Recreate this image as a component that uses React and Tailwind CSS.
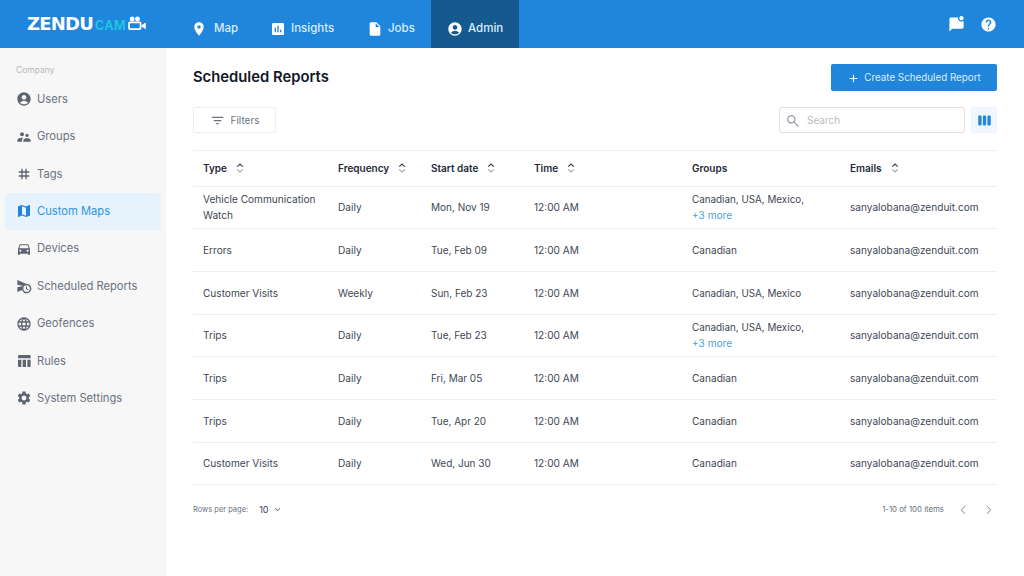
import {
  MdPlace, MdAssessment, MdInsertDriveFile, MdAccountCircle, MdMarkChatUnread, MdHelp,
  MdSupervisorAccount, MdTag, MdMap, MdDirectionsCar, MdScheduleSend, MdLanguage, MdTableChart,
  MdSettings, MdFilterList, MdSearch, MdViewWeek, MdAdd, MdKeyboardArrowDown,
} from "react-icons/md"
import { ChevronLeft, ChevronRight } from "lucide-react"

const navItems = [
  { label: "Map", icon: MdPlace, cls: "w-[82px] pl-[3px] gap-[7px]" },
  { label: "Insights", icon: MdAssessment, cls: "w-[97px] gap-[5px]" },
  { label: "Jobs", icon: MdInsertDriveFile, cls: "w-[63px] gap-[5px]" },
]

const sideItems = [
  { label: "Users", icon: MdAccountCircle },
  { label: "Groups", icon: MdSupervisorAccount },
  { label: "Tags", icon: MdTag },
  { label: "Custom Maps", icon: MdMap, active: true },
  { label: "Devices", icon: MdDirectionsCar },
  { label: "Scheduled Reports", icon: MdScheduleSend },
  { label: "Geofences", icon: MdLanguage },
  { label: "Rules", icon: MdTableChart },
  { label: "System Settings", icon: MdSettings },
]

const rows = [
  ["Vehicle Communication Watch", "Daily", "Mon, Nov 19", true],
  ["Errors", "Daily", "Tue, Feb 09", false],
  ["Customer Visits", "Weekly", "Sun, Feb 23", "plain"],
  ["Trips", "Daily", "Tue, Feb 23", true],
  ["Trips", "Daily", "Fri, Mar 05", false],
  ["Trips", "Daily", "Tue, Apr 20", false],
  ["Customer Visits", "Daily", "Wed, Jun 30", false],
]

function SortIcon() {
  return (
    <svg width="8" height="10" viewBox="0 0 8 10" fill="none" strokeWidth="1.2" className="shrink-0">
      <path d="M1.2 3.6 L4 1 L6.8 3.6" stroke="#374151" />
      <path d="M1.2 6.4 L4 9 L6.8 6.4" stroke="#a3a9b2" />
    </svg>
  )
}

function Logo() {
  return (
    <div className="flex items-end w-[125px] ml-[27px]">
      <span className="font-['DejaVu_Sans'] font-bold text-white text-[18px] leading-[20px] tracking-[-0.8px] w-[68px]">
        ZENDU
      </span>
      <span className="font-['Inter'] font-semibold text-[#1fc8e3] text-[12.5px] leading-[17px] tracking-[0.5px] w-[31px]">CAM</span>
      <svg width="20" height="15" viewBox="0 0 20 17" fill="none" className="mb-[3px] ml-[1px]">
        <circle cx="4.5" cy="3.5" r="2.8" fill="#fff" />
        <circle cx="10.5" cy="3.5" r="2.8" fill="#fff" />
        <rect x="1" y="7.2" width="13" height="7.6" rx="1" stroke="#fff" strokeWidth="2" />
        <path d="M15 10.5 L20 7.5 V15 L15 12 Z" fill="#fff" />
      </svg>
    </div>
  )
}

function Header() {
  return (
    <header className="h-12 bg-[#2086db] flex items-center shrink-0">
      <div className="w-[188px] shrink-0">
        <Logo />
      </div>
      {navItems.map(({ label, icon: Icon, cls }) => (
        <div key={label} className={`h-full flex items-center pt-[9px] text-[#dcecfa] text-[11.5px] font-medium ${cls}`}>
          <Icon className="text-white text-[16px] shrink-0" />
          <span>{label}</span>
        </div>
      ))}
      <div className="h-full w-[88px] ml-[1px] bg-[#155a8f] flex items-center pl-[16px] pt-[9px] gap-[5px] text-[#dcecfa] text-[11.5px] font-medium">
        <MdAccountCircle className="text-white text-[16px]" />
        <span>Admin</span>
      </div>
      <div className="ml-auto flex items-center gap-[15px] pr-[27px]">
        <MdMarkChatUnread className="text-white text-[17px]" />
        <MdHelp className="text-white text-[17px]" />
      </div>
    </header>
  )
}

function Sidebar() {
  return (
    <aside className="w-[166px] shrink-0 bg-[#f7f7f7] pt-[16px] px-[5px]">
      <div className="text-[8.5px] leading-[12px] text-[#b4b8bd] pl-[11px] mb-[4.5px]">Company</div>
      {sideItems.map(({ label, icon: Icon, active }) => (
        <div
          key={label}
          className={`h-[37.4px] flex items-center gap-[5px] pl-[11px] rounded-[3px] text-[11.2px] ${
            active ? "bg-[#e6f2fc] text-[#2f94e4]" : "text-[#6b7280]"
          }`}
        >
          <Icon className={`text-[16px] shrink-0 ${active ? "text-[#2086db]" : "text-[#5f6570]"}`} />
          <span>{label}</span>
        </div>
      ))}
    </aside>
  )
}

function Table() {
  const head = "h-[36px] text-left font-semibold text-[10px] text-[#1f2937] align-middle"
  const cell = "align-middle leading-[16px]"
  return (
    <table className="w-full table-fixed border-collapse mt-[16.5px] text-[10.1px] text-[#414854]">
      <colgroup>
        <col className="w-[145px]" />
        <col className="w-[93px]" />
        <col className="w-[103px]" />
        <col className="w-[158px]" />
        <col className="w-[158px]" />
        <col className="w-[147px]" />
      </colgroup>
      <thead>
        <tr className="border-y border-[#eeeeee]">
          {["Type", "Frequency", "Start date", "Time", "Groups", "Emails"].map((h, i) => (
            <th key={h} className={`${head} ${i === 0 ? "pl-[10px]" : ""}`}>
              <div className="flex items-center gap-[9px]">
                <span>{h}</span>
                {h !== "Groups" && <SortIcon />}
              </div>
            </th>
          ))}
        </tr>
      </thead>
      <tbody>
        {rows.map(([type, freq, date, groups], i) => (
          <tr key={i} className="h-[42.7px] border-b border-[#eeeeee]">
            <td className={`${cell} pl-[10px] pr-[16px]`}>{type}</td>
            <td className={cell}>{freq}</td>
            <td className={`${cell} text-[10px]`}>{date}</td>
            <td className={cell}>12:00 AM</td>
            <td className={cell}>
              {groups === true ? (
                <>
                  <div className="text-[9.85px]">Canadian, USA, Mexico,</div>
                  <div className="text-[#4aa3ee]">+3 more</div>
                </>
              ) : groups === "plain" ? (
                <span className="text-[9.85px]">Canadian, USA, Mexico</span>
              ) : (
                "Canadian"
              )}
            </td>
            <td className={cell}>sanyalobana@zenduit.com</td>
          </tr>
        ))}
      </tbody>
    </table>
  )
}

export default function App() {
  return (
    <div className="w-[1024px] h-[576px] overflow-hidden flex flex-col bg-white font-['Inter',sans-serif]">
      <Header />
      <div className="flex flex-1 min-h-0">
        <Sidebar />
        <main className="flex-1 pl-[27px] pr-[27px] pt-[16px]">
          <div className="flex items-center justify-between h-[27px]">
            <h1 className="text-[14.8px] font-semibold text-[#111827]">Scheduled Reports</h1>
            <button className="w-[166px] h-[27px] bg-[#2086db] rounded-[2px] text-[#dcecfa] text-[9.8px] flex items-center justify-center gap-[4px] pt-[1px]">
              <MdAdd className="text-white text-[13px]" />
              <span>Create Scheduled Report</span>
            </button>
          </div>
          <div className="flex items-center mt-[16px] h-[26px]">
            <button className="w-[83px] h-full border border-[#eeeeee] rounded-[2px] text-[#6b7280] text-[10px] flex items-center justify-center gap-[6px] pt-[1px]">
              <MdFilterList className="text-[#6b7280] text-[15px]" />
              <span>Filters</span>
            </button>
            <div className="ml-auto w-[186px] h-full border border-[#dedede] rounded-[3px] flex items-center pl-[5px] gap-[6px] text-[10px] text-[#b9bdc3] pt-[1px]">
              <MdSearch className="text-[#9ca3af] text-[16px]" />
              <span>Search</span>
            </div>
            <div className="ml-[6px] w-[26px] h-full bg-[#f0f6fd] rounded-[2px] flex items-center justify-center">
              <MdViewWeek className="text-[#2086db] text-[15px]" />
            </div>
          </div>
          <Table />
          <div className="flex items-center mt-[14.5px] h-[20px] text-[7.5px] text-[#6b7280]">
            <span>Rows per page:</span>
            <span className="ml-[11px] text-[#374151] text-[9px]">10</span>
            <MdKeyboardArrowDown className="ml-[3px] text-[11px]" />
            <span className="ml-auto text-[7.8px]">1-10 of 100 items</span>
            <ChevronLeft size={14} strokeWidth={1.5} className="ml-[12px] text-[#6b7280]" />
            <ChevronRight size={14} strokeWidth={1.5} className="ml-[12px] mr-[1px] text-[#6b7280]" />
          </div>
        </main>
      </div>
    </div>
  )
}
